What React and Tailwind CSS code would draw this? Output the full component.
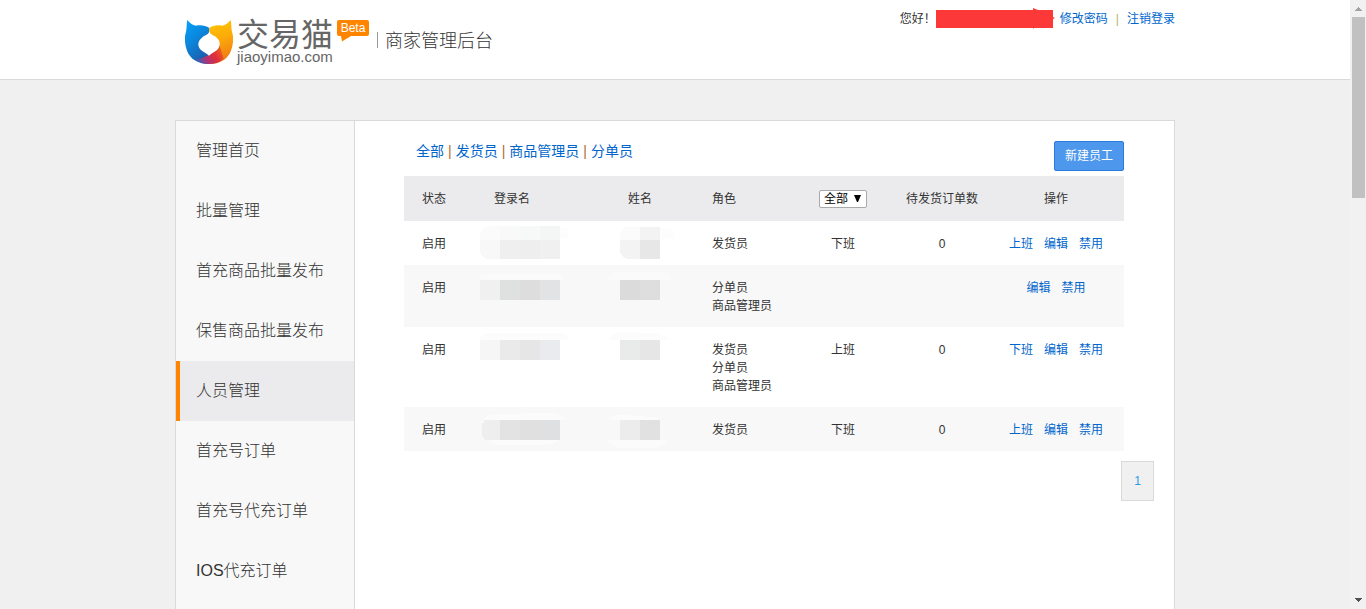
import React, { useState } from "react";

const menus = [
  "管理首页",
  "批量管理",
  "首充商品批量发布",
  "保售商品批量发布",
  "人员管理",
  "首充号订单",
  "首充号代充订单",
  "IOS代充订单",
];

const filters = ["全部", "发货员", "商品管理员", "分单员"];

// login / name are stored masked: soft = smudge path, cells = [x, y, w, h, color]
const staff = [
  {
    id: 1,
    roles: ["发货员"],
    duty: "下班",
    orders: 0,
    actions: ["上班", "编辑", "禁用"],
    login: {
      soft: "M104 7h8q8 2 6 11h-14z",
      softColor: "#fdfdfd",
      cells: [
        [24, 5, 20, 14, "#fbfbfb"],
        [44, 5, 20, 14, "#f9f9f9"],
        [64, 5, 20, 14, "#f7f8f8"],
        [84, 5, 20, 14, "#f4f6f6"],
        [24, 19, 20, 19, "#f8f8f8"],
        [44, 19, 20, 19, "#efefef"],
        [64, 19, 20, 19, "#eeeeee"],
        [84, 19, 20, 19, "#f0f0f0"],
      ],
      corners: true,
    },
    name: {
      soft: "M92 7h8q8 2 6 11h-14z",
      softColor: "#fdfdfd",
      cells: [
        [52, 6, 20, 13, "#fbfbfb"],
        [72, 6, 20, 13, "#f3f3f3"],
        [52, 19, 20, 19, "#f3f3f3"],
        [72, 19, 20, 19, "#e7e7e7"],
      ],
      corners: true,
    },
  },
  {
    id: 2,
    roles: ["分单员", "商品管理员"],
    duty: "",
    orders: null,
    actions: ["编辑", "禁用"],
    login: {
      soft: "M22 15q2-7 12-7h64q9 1 9 7z",
      softColor: "#fafafa",
      cells: [
        [24, 15, 20, 20, "#f0f0f0"],
        [44, 15, 20, 20, "#dfe1e0"],
        [64, 15, 20, 20, "#dddddd"],
        [84, 15, 20, 20, "#e2e3e5"],
      ],
    },
    name: {
      soft: "M38 15q4-8 14-8h40q10 1 11 8z",
      softColor: "#fafafa",
      cells: [
        [52, 15, 20, 20, "#dbdbdb"],
        [72, 15, 20, 20, "#dedede"],
      ],
    },
  },
  {
    id: 3,
    roles: ["发货员", "分单员", "商品管理员"],
    duty: "上班",
    orders: 0,
    actions: ["下班", "编辑", "禁用"],
    login: {
      soft: "M22 13q4-7 14-7h68q9 1 13 7z",
      softColor: "#fcfcfc",
      cells: [
        [24, 13, 20, 20, "#f6f6f6"],
        [44, 13, 20, 20, "#eaeaea"],
        [64, 13, 20, 20, "#e6e6e6"],
        [84, 13, 20, 20, "#eaebee"],
      ],
    },
    name: {
      soft: "M40 13q6-9 16-8l30 1q10 1 15 7z",
      softColor: "#fcfcfc",
      cells: [
        [52, 13, 20, 20, "#e9ebea"],
        [72, 13, 20, 20, "#e6e6e6"],
      ],
    },
  },
  {
    id: 4,
    roles: ["发货员"],
    duty: "下班",
    orders: 0,
    actions: ["上班", "编辑", "禁用"],
    login: {
      soft: "M27 13q4-6 14-6l50-1q14 0 19 7h-6v20q-4 5-22 5h-38q-8 0-12-6z",
      softColor: "#fbfbfb",
      cells: [
        [28, 13, 16, 20, "#eeeeee"],
        [26, 16, 2, 14, "#eeeeee"],
        [44, 13, 20, 20, "#e3e3e3"],
        [64, 13, 20, 20, "#e0e0e0"],
        [84, 13, 20, 20, "#dfe0e2"],
      ],
    },
    name: {
      soft: "M40 13q6-6 16-5l26 2q8 0 10 3v20h8q-6 8-16 8h-30q-10 0-15-8h13v-20z",
      softColor: "#fbfbfb",
      cells: [
        [52, 13, 20, 20, "#ececec"],
        [72, 13, 20, 20, "#e1e1e1"],
      ],
    },
  },
];

function Logo() {
  return (
    <svg className="h-11 w-12" viewBox="0 0 144 132" aria-hidden="true">
      <defs>
        <linearGradient id="blue" x1="0" y1="0" x2="0.5" y2="1">
          <stop offset="0" stopColor="#04a4fb" />
          <stop offset="0.5" stopColor="#0b86dc" />
          <stop offset="1" stopColor="#1a5fae" />
        </linearGradient>
        <linearGradient id="yellow" x1="0" y1="0" x2="0.2" y2="1">
          <stop offset="0" stopColor="#ffc800" />
          <stop offset="0.5" stopColor="#fbaa0a" />
          <stop offset="1" stopColor="#f07a12" />
        </linearGradient>
        <linearGradient id="red" x1="0" y1="0.6" x2="1" y2="0.2">
          <stop offset="0" stopColor="#4a58b0" />
          <stop offset="0.3" stopColor="#b3326f" />
          <stop offset="0.6" stopColor="#e02f3c" />
          <stop offset="1" stopColor="#ee6b16" />
        </linearGradient>
      </defs>
      <path
        fill="url(#blue)"
        d="M7 0C14 9 22 15 33 17C46 14 62 16 73 24V132C40 132 15 117 6 92C-2 70-2 50 3 36C6 24 4 12 7 0Z"
      />
      <path
        fill="url(#yellow)"
        d="M137 0C130 9 122 15 111 17C98 14 82 16 73 24V132C104 132 129 117 138 92C146 70 146 50 141 36C138 24 140 12 137 0Z"
      />
      <path
        fill="url(#red)"
        d="M32 119C50 116 86 102 103 74L116 116C104 127 90 132 72 132C56 132 44 127 32 119Z"
      />
      <path
        fill="#fff"
        d="M73 34C70 46 60 44 50 54C36 66 38 80 48 90C56 97 64 99 72 107C80 99 88 97 96 90C106 80 108 66 96 54C86 44 76 46 73 34Z"
      />
    </svg>
  );
}

function Masked({ data, width }) {
  return (
    <svg
      className="mx-auto block h-11"
      width={width}
      height="44"
      shapeRendering="crispEdges"
      aria-hidden="true"
    >
      <path d={data.soft} fill={data.softColor} />
      {data.cells.map(([x, y, w, h, color], idx) => (
        <rect key={idx} x={x} y={y} width={w} height={h} fill={color} />
      ))}
      {data.corners && (
        <path
          fill="#fff"
          transform={`translate(${data.cells[0][0]} 0)`}
          d="M0 5h9q-7 2-9 8zM0 39v-8q2 6 10 8z"
        />
      )}
    </svg>
  );
}

function Header() {
  return (
    <header className="h-20 border-b border-[#d9d9d9] bg-white">
      <div className="mx-auto flex max-w-[1000px] items-start justify-between">
        <div className="flex pl-[10px]">
          <a href="#" className="flex pt-5">
            <Logo />
            <div className="ml-1 flex flex-col text-[#666]">
              <span className="text-[32px] leading-[30px] font-normal">交易猫</span>
              <span className="text-[15px] leading-[14px]">jiaoyimao.com</span>
            </div>
          </a>
          <div className="ml-1 pt-5">
            <span className="block h-4 w-8 rounded-xs bg-[#ff8500] text-center text-xs leading-4 text-white">
              Beta
            </span>
            <svg className="ml-1 block" width="10" height="6" aria-hidden="true">
              <path d="M0 0h10L1 5.5z" fill="#ff8500" />
            </svg>
          </div>
          <div className="mt-8 ml-2 h-4 border-l border-[#999]" />
          <h1 className="ml-[7px] pt-7 text-lg leading-[26px] font-light text-[#333]">
            商家管理后台
          </h1>
        </div>

        <div className="flex items-center pt-[10px] leading-[18px]">
          <span>您好！</span>
          <svg className="-my-0.5 h-[22px] w-[120px]" viewBox="0 0 120 22" aria-hidden="true">
            <path
              fill="#fc3838"
              d="M0 2H97V0L102 2H117V9L119 10L117 11V20H98L97 21V20H0Z"
            />
          </svg>
          <a href="#" className="ml-1 text-[#06c]">修改密码</a>
          <span className="mx-2 text-[#b5b56a]">|</span>
          <a href="#" className="text-[#06c]">注销登录</a>
        </div>
      </div>
    </header>
  );
}

function Sidebar({ active, setActive }) {
  return (
    <nav className="w-[179px] shrink-0 border-r border-[#d9d9d9] bg-[#f8f8f8]">
      {menus.map((item) => (
        <a
          key={item}
          href="#"
          onClick={() => setActive(item)}
          className={`block h-[60px] border-l-4 pl-4 text-base leading-[60px] font-light ${
            active === item ? "border-[#ff8500] bg-[#ebebed]" : "border-transparent"
          }`}
        >
          {item}
        </a>
      ))}
    </nav>
  );
}

function StaffTable() {
  const [duty, setDuty] = useState("全部");

  return (
    <table className="mt-[5px] w-full table-fixed text-center leading-[18px]">
      <colgroup>
        <col className="w-[52px]" />
        <col className="w-[112px]" />
        <col className="w-[144px]" />
        <col className="w-[78px]" />
        <col className="w-[106px]" />
        <col className="w-[92px]" />
        <col className="w-[136px]" />
      </colgroup>
      <thead>
        <tr className="h-[45px] bg-[#ebebed]">
          <th className="pl-[18px] text-left font-normal whitespace-nowrap">状态</th>
          <th className="font-normal">登录名</th>
          <th className="font-normal">姓名</th>
          <th className="text-left font-normal">角色</th>
          <th className="font-normal">
            <div className="relative mx-auto h-[18px] w-12">
              <select
                aria-label="上班状态"
                value={duty}
                onChange={(e) => setDuty(e.target.value)}
                className="block h-[18px] w-12 appearance-none rounded-xs border border-[#a9a9a9] bg-white pl-1 text-xs leading-4 text-black"
              >
                <option>全部</option>
                <option>上班</option>
                <option>下班</option>
              </select>
              <svg
                className="pointer-events-none absolute top-[5px] right-1.5"
                width="7"
                height="7"
                aria-hidden="true"
              >
                <path d="M0 0h7L4 7h-1z" fill="#000" />
              </svg>
            </div>
          </th>
          <th className="font-normal">待发货订单数</th>
          <th className="font-normal">操作</th>
        </tr>
      </thead>
      <tbody>
        {staff.map((item) => (
          <tr key={item.id} className="align-top even:bg-[#f8f8f8]">
            <td className="pt-[14px] pb-3 pl-[18px] text-left whitespace-nowrap">启用</td>
            <td className="p-0">
              <Masked data={item.login} width={112} />
            </td>
            <td className="p-0">
              <Masked data={item.name} width={144} />
            </td>
            <td className="pt-[14px] pb-3 text-left">
              {item.roles.map((role) => (
                <p key={role}>{role}</p>
              ))}
            </td>
            <td className="pt-[14px] pb-3">{item.duty}</td>
            <td className="pt-[14px] pb-3">{item.orders}</td>
            <td className="pt-[14px] pb-3">
              <div className="flex justify-center gap-[11px] text-[#06c]">
                {item.actions.map((action) => (
                  <a key={action} href="#">{action}</a>
                ))}
              </div>
            </td>
          </tr>
        ))}
      </tbody>
    </table>
  );
}

function Scrollbar() {
  return (
    <div className="flex w-4 shrink-0 flex-col items-center bg-[#f1f1f1]" aria-hidden="true">
      <svg width="7" height="17" shapeRendering="crispEdges">
        <path d="M0 11h7v-1h-1v-1h-1v-1h-1v-1h-1v1h-1v1h-1v1h-1z" fill="#a3a3a3" />
      </svg>
      <div className="h-[181px] w-[13px] bg-[#c1c1c1]" />
      <svg className="mt-auto" width="7" height="17" shapeRendering="crispEdges">
        <path d="M0 6h7v1h-1v1h-1v1h-1v1h-1v-1h-1v-1h-1v-1h-1z" fill="#505050" />
      </svg>
    </div>
  );
}

function App() {
  const [active, setActive] = useState("人员管理");

  return (
    <div className="flex h-screen overflow-hidden bg-[#f0f0f0] font-['Liberation_Sans','Noto_Sans_CJK_SC',sans-serif] text-xs text-[#333]">
      <div className="min-w-0 flex-1 overflow-hidden">
        <Header />
        <div className="mx-auto mt-10 flex min-h-screen max-w-[1000px] border border-[#d9d9d9] bg-white">
          <Sidebar active={active} setActive={setActive} />
          <main className="min-w-0 flex-1 pt-5 pr-5 pl-[49px]">
            <div className="mr-[30px]">
              <div className="flex justify-between">
                <div className="flex gap-1 pl-3 text-sm leading-5 text-[#b06a30]">
                  {filters.map((item, idx) => (
                    <React.Fragment key={item}>
                      {idx > 0 && <span>|</span>}
                      <a href="#" className="text-[#06c]">{item}</a>
                    </React.Fragment>
                  ))}
                </div>
                <button className="h-[30px] w-[70px] rounded-xs border border-[#2a7ae2] bg-[#4d97ec] text-xs text-white">
                  新建员工
                </button>
              </div>
              <StaffTable />
            </div>
            <div className="mt-[10px] flex justify-end">
              <a
                href="#"
                className="h-10 w-[33px] border border-[#d9d9d9] bg-[#f0f0f0] text-center leading-[38px] text-[#2a9be8]"
              >
                1
              </a>
            </div>
          </main>
        </div>
      </div>
      <Scrollbar />
    </div>
  );
}

export default App;
